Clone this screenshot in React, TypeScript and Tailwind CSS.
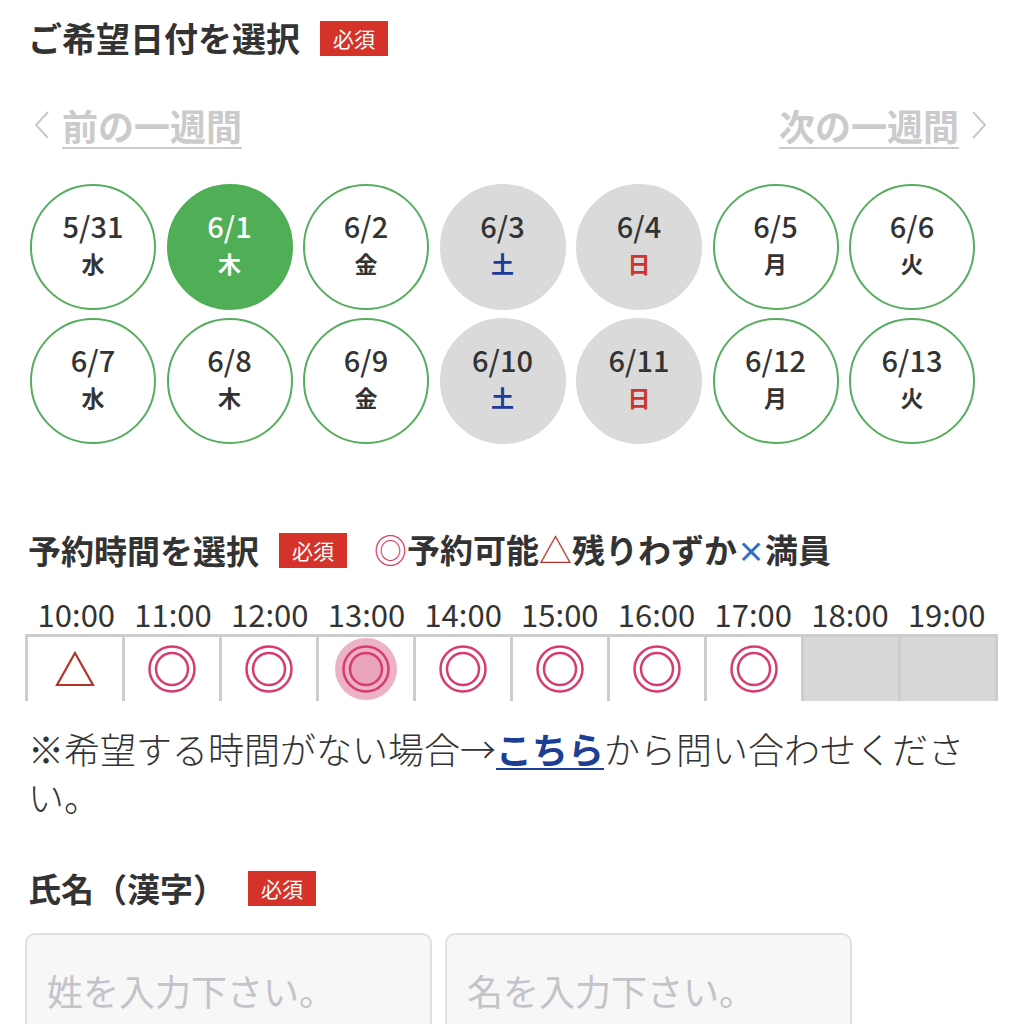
import React from 'react'

const FONT = { fontFamily: '"Noto Sans CJK JP", "Noto Sans", sans-serif' }

type Day = { date: string; wd: string; kind: 'open' | 'sel' | 'sat' | 'sun' }

const WEEKS: Day[][] = [
  [
    { date: '5/31', wd: '水', kind: 'open' },
    { date: '6/1', wd: '木', kind: 'sel' },
    { date: '6/2', wd: '金', kind: 'open' },
    { date: '6/3', wd: '土', kind: 'sat' },
    { date: '6/4', wd: '日', kind: 'sun' },
    { date: '6/5', wd: '月', kind: 'open' },
    { date: '6/6', wd: '火', kind: 'open' },
  ],
  [
    { date: '6/7', wd: '水', kind: 'open' },
    { date: '6/8', wd: '木', kind: 'open' },
    { date: '6/9', wd: '金', kind: 'open' },
    { date: '6/10', wd: '土', kind: 'sat' },
    { date: '6/11', wd: '日', kind: 'sun' },
    { date: '6/12', wd: '月', kind: 'open' },
    { date: '6/13', wd: '火', kind: 'open' },
  ],
]

type Slot = { time: string; st: 'few' | 'ok' | 'sel' | 'none' }

const SLOTS: Slot[] = [
  { time: '10:00', st: 'few' },
  { time: '11:00', st: 'ok' },
  { time: '12:00', st: 'ok' },
  { time: '13:00', st: 'sel' },
  { time: '14:00', st: 'ok' },
  { time: '15:00', st: 'ok' },
  { time: '16:00', st: 'ok' },
  { time: '17:00', st: 'ok' },
  { time: '18:00', st: 'none' },
  { time: '19:00', st: 'none' },
]

function Required() {
  return (
    <span className="inline-flex h-[35px] w-[68px] items-center justify-center bg-[#d5332a] text-[21px] leading-none text-white">
      必須
    </span>
  )
}

function DayCircle({ d }: { d: Day }) {
  const box =
    d.kind === 'sel'
      ? 'bg-[#4fae56] border-[#4fae56] text-white'
      : d.kind === 'open'
        ? 'bg-white border-[#55ad5d] text-[#333]'
        : 'bg-[#dadada] border-[#dadada] text-[#333]'
  const wdColor =
    d.kind === 'sat' ? 'text-[#1b3b9c]' : d.kind === 'sun' ? 'text-[#cf3434]' : ''
  return (
    <div
      className={`flex h-[126px] w-[126px] flex-col items-center justify-center rounded-full border-2 ${box}`}
    >
      <span className="-mt-[6px] text-[29px] font-medium leading-[36px]">{d.date}</span>
      <span className={`mt-[2px] text-[23px] font-bold leading-[36px] ${wdColor}`}>{d.wd}</span>
    </div>
  )
}

function DoubleCircle({ selected }: { selected?: boolean }) {
  return (
    <svg width="64" height="64" viewBox="0 0 64 64">
      {selected && <circle cx="32" cy="32" r="31" fill="#eeb2c5" />}
      <circle cx="32" cy="32" r="22.5" fill="none" stroke="#d63c70" strokeWidth="2.5" />
      <circle
        cx="32"
        cy="32"
        r="16"
        fill={selected ? '#e9a3bb' : 'none'}
        stroke="#d63c70"
        strokeWidth="2.5"
      />
    </svg>
  )
}

function Triangle() {
  return (
    <svg width="44" height="40" viewBox="0 0 44 40">
      <polygon points="22,4 40,36 4,36" fill="none" stroke="#b2352c" strokeWidth="2.2" />
    </svg>
  )
}

function Chevron({ dir }: { dir: 'l' | 'r' }) {
  return (
    <svg width="18" height="30" viewBox="0 0 18 30">
      <polyline
        points={dir === 'l' ? '15,2 3,15 15,28' : '3,2 15,15 3,28'}
        fill="none"
        stroke="#c9c9c9"
        strokeWidth="2"
      />
    </svg>
  )
}

export default function App() {
  return (
    <div className="min-h-screen w-[1020px] overflow-hidden bg-white text-[#333]" style={FONT}>
      {/* 日付選択 */}
      <div className="mt-[18px] flex h-[40px] items-center gap-[20px] pl-[28px]">
        <h2 className="text-[34px] font-bold leading-[40px] text-[#333]">ご希望日付を選択</h2>
        <Required />
      </div>

      <div className="mt-[47px] flex h-[40px] items-center justify-between pl-[33px] pr-[32px]">
        <a className="flex items-center gap-[11px] text-[36px] font-bold leading-[40px] text-[#cbcbcb]">
          <Chevron dir="l" />
          <span className="underline decoration-2 underline-offset-[6px]">前の一週間</span>
        </a>
        <a className="flex items-center gap-[11px] text-[36px] font-bold leading-[40px] text-[#cbcbcb]">
          <span className="underline decoration-2 underline-offset-[6px]">次の一週間</span>
          <Chevron dir="r" />
        </a>
      </div>

      <div className="mt-[39px] flex flex-col gap-[8px] pl-[30px]">
        {WEEKS.map((w, i) => (
          <div key={i} className="flex gap-[10.5px]">
            {w.map((d) => (
              <DayCircle key={d.date} d={d} />
            ))}
          </div>
        ))}
      </div>

      {/* 時間選択 */}
      <div className="mt-[86px] flex h-[40px] items-center pl-[28px]">
        <h2 className="text-[33px] font-bold leading-[40px] text-[#333]">予約時間を選択</h2>
        <span className="ml-[20px]">
          <Required />
        </span>
        <span className="ml-[27px] text-[33px] font-bold leading-[40px] text-[#333]">
          <span className="font-normal text-[#d63c70]">◎</span>予約可能
          <span className="font-normal text-[#b2352c]">△</span>残りわずか
          <span className="text-[28px] text-[#2f6fc2]">×</span>満員
        </span>
      </div>

      <div className="mx-[25px] mt-[26px] grid w-[973px] grid-cols-10 px-[3px]">
        {SLOTS.map((s) => (
          <div key={s.time} className="text-center text-[31px] leading-[36px] text-[#333]">
            {s.time}
          </div>
        ))}
      </div>

      <div className="mx-[25px] mt-[2px] grid h-[67px] w-[973px] grid-cols-10 gap-[3px] bg-[#cdcdcd] p-[3px]">
        {SLOTS.map((s) => (
          <div
            key={s.time}
            className={`flex items-center justify-center ${s.st === 'none' ? 'bg-[#d8d8d8]' : 'bg-white'}`}
          >
            {s.st === 'few' && <Triangle />}
            {s.st === 'ok' && <DoubleCircle />}
            {s.st === 'sel' && <DoubleCircle selected />}
          </div>
        ))}
      </div>

      <p className="mt-[23px] w-[990px] pl-[28px] pr-[20px] text-[36px] font-light leading-[48px] text-[#333]">
        ※希望する時間がない場合→<a className="font-bold text-[#1c3e93] underline decoration-2 underline-offset-4">こちら</a>から問い合わせください。
      </p>

      {/* 氏名 */}
      <div className="mt-[48px] flex h-[40px] items-center pl-[28px]">
        <h2 className="text-[33px] font-bold leading-[40px] text-[#333]">氏名（漢字）</h2>
        <span className="ml-[22px]">
          <Required />
        </span>
      </div>

      <div className="mt-[25px] flex gap-[13px] pl-[25px]">
        <div className="flex h-[114px] w-[407px] items-center rounded-[10px] border-2 border-[#e0e0e0] bg-[#f7f7f7] pl-[20px] text-[36px] text-[#c3c3c9]">
          姓を入力下さい。
        </div>
        <div className="flex h-[114px] w-[407px] items-center rounded-[10px] border-2 border-[#e0e0e0] bg-[#f7f7f7] pl-[20px] text-[36px] text-[#c3c3c9]">
          名を入力下さい。
        </div>
      </div>
    </div>
  )
}
